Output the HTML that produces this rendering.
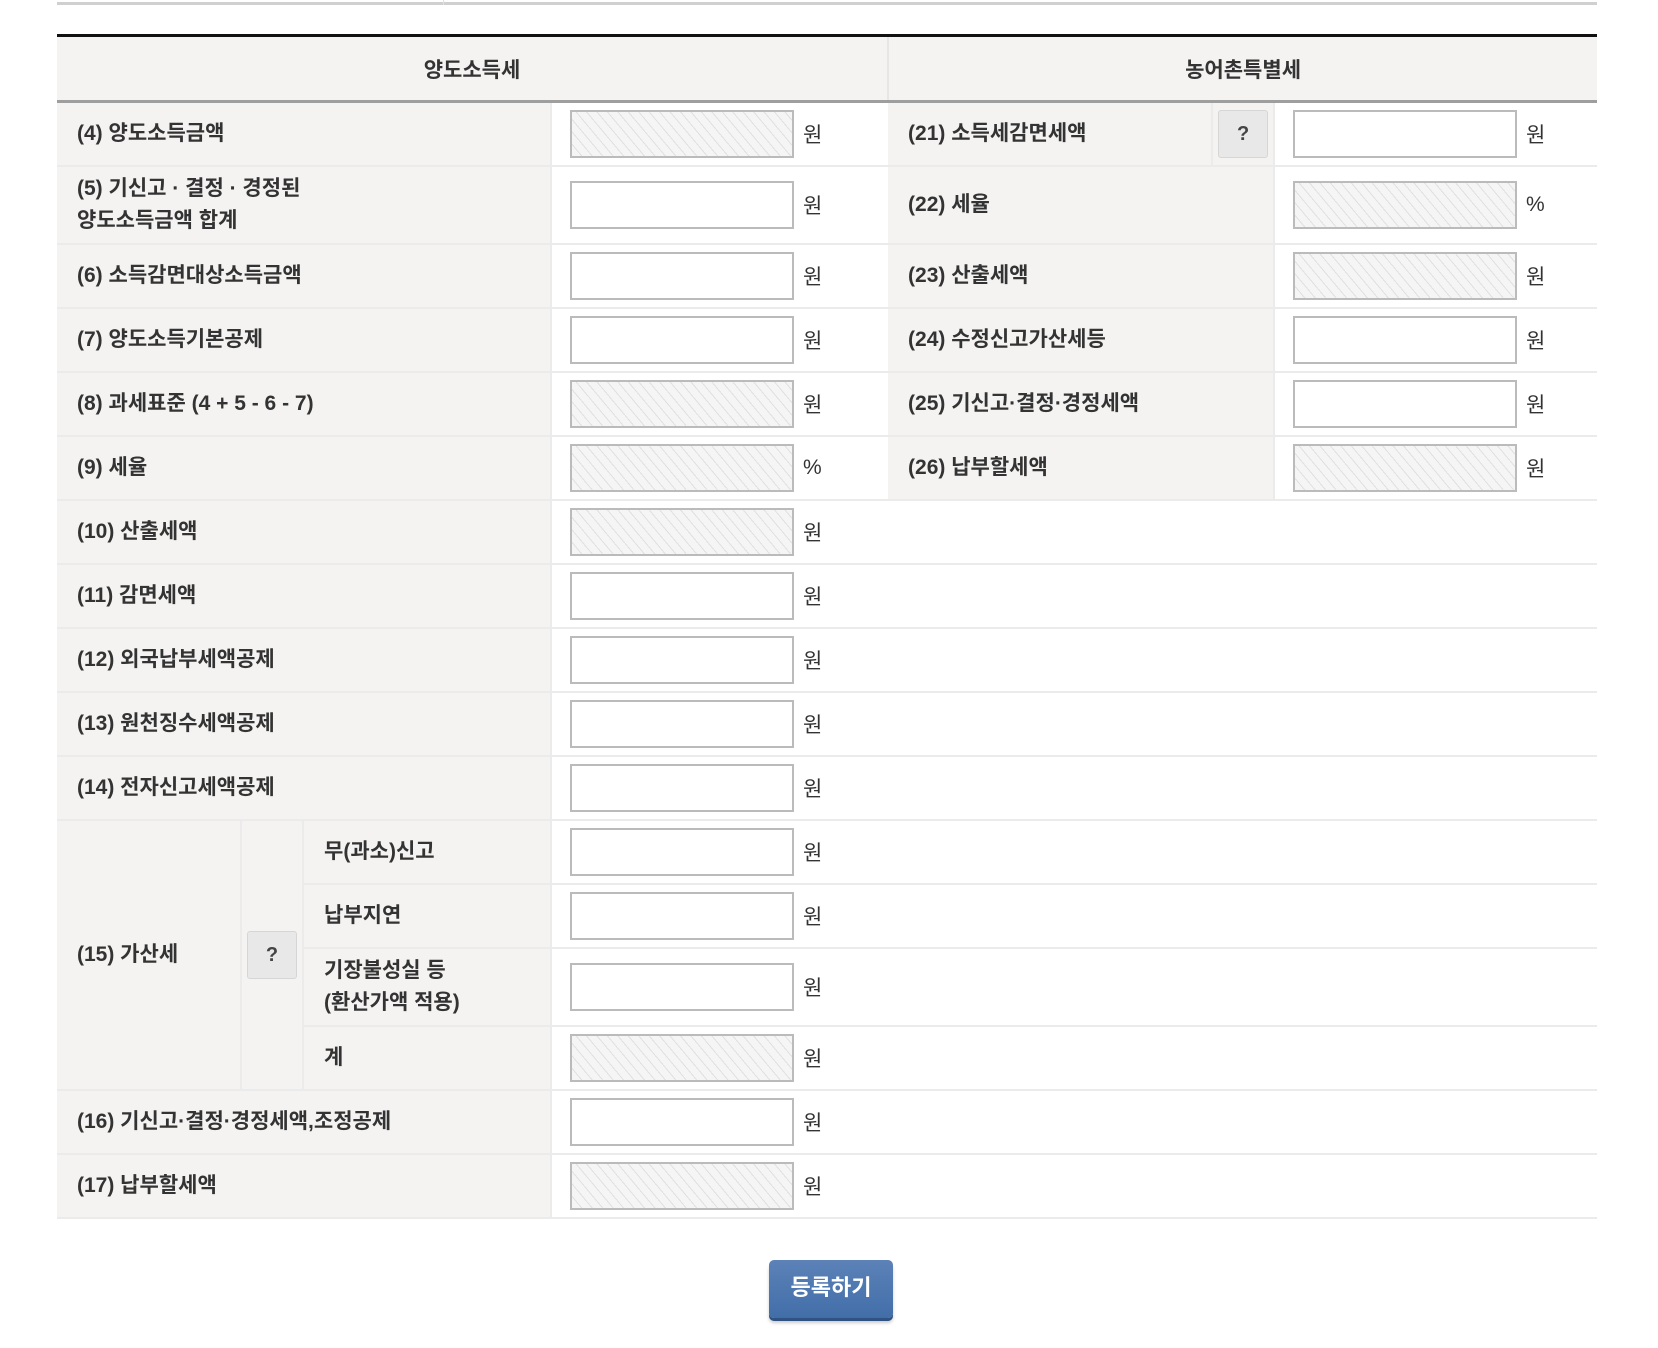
<!DOCTYPE html>
<html><head><meta charset="utf-8"><style>
*{box-sizing:border-box;margin:0;padding:0}
body{width:1658px;height:1348px;background:#fff;position:relative;font-family:"Liberation Sans","Noto Sans CJK KR",sans-serif;color:#333;overflow:hidden}
.topline{position:absolute;left:57px;top:2px;width:1540px;height:3px;background:#d0d0d0}
.topdiv{position:absolute;left:443px;top:0;width:1px;height:5px;background:#e0e0e0}
table{position:absolute;left:57px;top:34px;width:1540px;border-collapse:collapse;table-layout:fixed}
td,th{padding:0;font-size:21px;font-weight:bold;vertical-align:middle;border-bottom:2px solid #ebebeb}
th{background:#f4f3f2;height:66px;border-top:3px solid #111;border-bottom:3px solid #9e9e9e;text-align:center;font-size:21px}
th.r{border-left:2px solid #e6e6e6}
.l{background:#f4f3f2;padding-left:20px;line-height:32px}
.l2{background:#f4f3f2;padding-left:20px;line-height:32px;border-left:2px solid #ebebeb}
.i{background:#fff;border-left:2px solid #ebebeb;white-space:nowrap}
.box{display:inline-block;vertical-align:middle;width:224px;height:48px;border:2px solid #bbb;background:#fff;margin-left:18px}
.h{background:#f5f5f5 repeating-linear-gradient(50deg,#f5f5f5 0 7px,#e0e0e0 7px 8px)}
.u{display:inline-block;vertical-align:middle;margin-left:9px;font-weight:normal;font-size:21px;color:#333}
.q{display:inline-block;width:50px;height:48px;background:#e8e8e8;border:1px solid #d6d6d6;border-radius:3px;text-align:center;line-height:46px;font-size:20px;color:#444}
.qc{background:#f4f3f2;text-align:center;border-left:2px solid #ebebeb}
.e{border-bottom:2px solid #ebebeb;background:#fff}
.r64{height:64px}.r80{height:78px}
.btn{position:absolute;left:769px;top:1260px;width:124px;height:58px;border-radius:5px;background:linear-gradient(#5c82b8,#426ea8);box-shadow:0 3px 0 #2f5282,0 5px 3px #ccc;color:#fff;font-weight:bold;font-size:22px;text-align:center;line-height:56px}
</style></head><body>
<div class="topline"></div><div class="topdiv"></div>
<table>
<colgroup><col style="width:184px"><col style="width:62px"><col style="width:248px"><col style="width:337px"><col style="width:324px"><col style="width:62px"><col style="width:323px"></colgroup>
<tr><th colspan="4">양도소득세</th><th colspan="3" class="r">농어촌특별세</th></tr>
<tr class="r64"><td class="l" colspan="3">(4) 양도소득금액</td><td class="i"><span class="box h"></span><span class="u">원</span></td>
<td class="l">(21) 소득세감면세액</td><td class="qc"><span class="q">?</span></td><td class="i"><span class="box"></span><span class="u">원</span></td></tr>
<tr class="r80"><td class="l" colspan="3">(5) 기신고 · 결정 · 경정된<br>양도소득금액 합계</td><td class="i"><span class="box"></span><span class="u">원</span></td>
<td class="l" colspan="2">(22) 세율</td><td class="i"><span class="box h"></span><span class="u">%</span></td></tr>
<tr class="r64"><td class="l" colspan="3">(6) 소득감면대상소득금액</td><td class="i"><span class="box"></span><span class="u">원</span></td>
<td class="l" colspan="2">(23) 산출세액</td><td class="i"><span class="box h"></span><span class="u">원</span></td></tr>
<tr class="r64"><td class="l" colspan="3">(7) 양도소득기본공제</td><td class="i"><span class="box"></span><span class="u">원</span></td>
<td class="l" colspan="2">(24) 수정신고가산세등</td><td class="i"><span class="box"></span><span class="u">원</span></td></tr>
<tr class="r64"><td class="l" colspan="3">(8) 과세표준 (4 + 5 - 6 - 7)</td><td class="i"><span class="box h"></span><span class="u">원</span></td>
<td class="l" colspan="2">(25) 기신고·결정·경정세액</td><td class="i"><span class="box"></span><span class="u">원</span></td></tr>
<tr class="r64"><td class="l" colspan="3">(9) 세율</td><td class="i"><span class="box h"></span><span class="u">%</span></td>
<td class="l" colspan="2">(26) 납부할세액</td><td class="i"><span class="box h"></span><span class="u">원</span></td></tr>
<tr class="r64"><td class="l" colspan="3">(10) 산출세액</td><td class="i"><span class="box h"></span><span class="u">원</span></td><td class="e" colspan="3"></td></tr>
<tr class="r64"><td class="l" colspan="3">(11) 감면세액</td><td class="i"><span class="box"></span><span class="u">원</span></td><td class="e" colspan="3"></td></tr>
<tr class="r64"><td class="l" colspan="3">(12) 외국납부세액공제</td><td class="i"><span class="box"></span><span class="u">원</span></td><td class="e" colspan="3"></td></tr>
<tr class="r64"><td class="l" colspan="3">(13) 원천징수세액공제</td><td class="i"><span class="box"></span><span class="u">원</span></td><td class="e" colspan="3"></td></tr>
<tr class="r64"><td class="l" colspan="3">(14) 전자신고세액공제</td><td class="i"><span class="box"></span><span class="u">원</span></td><td class="e" colspan="3"></td></tr>
<tr class="r64"><td class="l" rowspan="4">(15) 가산세</td><td class="qc" rowspan="4"><span class="q">?</span></td><td class="l2">무(과소)신고</td><td class="i"><span class="box"></span><span class="u">원</span></td><td class="e" colspan="3"></td></tr>
<tr class="r64"><td class="l2">납부지연</td><td class="i"><span class="box"></span><span class="u">원</span></td><td class="e" colspan="3"></td></tr>
<tr class="r80"><td class="l2">기장불성실 등<br>(환산가액 적용)</td><td class="i"><span class="box"></span><span class="u">원</span></td><td class="e" colspan="3"></td></tr>
<tr class="r64"><td class="l2">계</td><td class="i"><span class="box h"></span><span class="u">원</span></td><td class="e" colspan="3"></td></tr>
<tr class="r64"><td class="l" colspan="3">(16) 기신고·결정·경정세액,조정공제</td><td class="i"><span class="box"></span><span class="u">원</span></td><td class="e" colspan="3"></td></tr>
<tr class="r64"><td class="l" colspan="3">(17) 납부할세액</td><td class="i"><span class="box h"></span><span class="u">원</span></td><td class="e" colspan="3"></td></tr>
</table>
<div class="btn">등록하기</div>
</body></html>
